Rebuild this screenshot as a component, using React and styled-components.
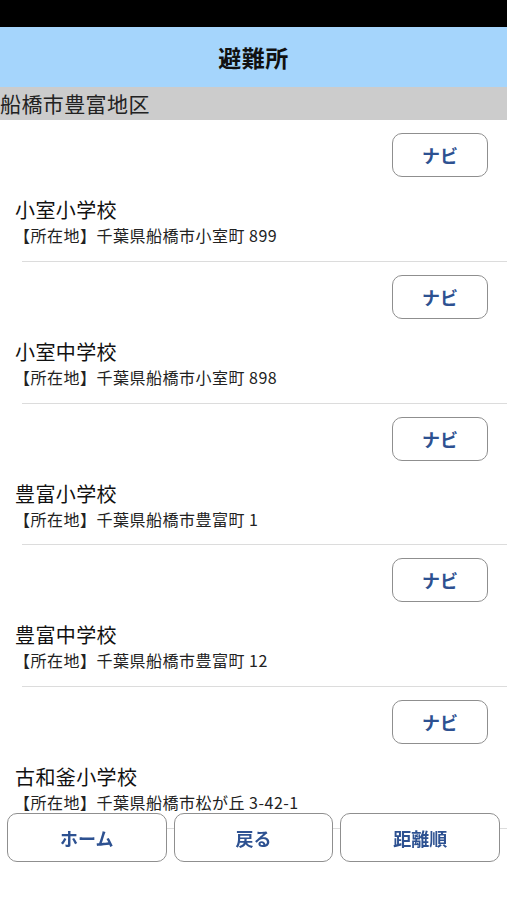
import React from "react";
import styled, { createGlobalStyle } from "styled-components";

const Global = createGlobalStyle`
  html, body { margin: 0; padding: 0; background: #fff; }
  body {
    font-family: "Noto Sans CJK JP", "Noto Sans", sans-serif;
    color: #111;
    -webkit-font-smoothing: antialiased;
  }
`;

const Page = styled.div`
  width: 507px;
  min-height: 900px;
  display: flex;
  flex-direction: column;
`;

const StatusBar = styled.div`
  height: 27px;
  background: #000;
`;

const Header = styled.header`
  height: 60px;
  background: #a5d5fc;
  display: flex;
  align-items: center;
  justify-content: center;
`;

const Title = styled.h1`
  margin: 0;
  font-size: 23px;
  font-weight: 700;
  color: #111;
  letter-spacing: 0.5px;
`;

const SectionBar = styled.div`
  height: 33px;
  background: #cccccc;
  display: flex;
  align-items: center;
  font-size: 21px;
  letter-spacing: 0.4px;
  color: #222;
  line-height: 1;
`;

const List = styled.ul`
  list-style: none;
  margin: 0;
  padding: 0;
`;

const Item = styled.li`
  padding: 13px 0 15.75px;
  display: flex;
  flex-direction: column;
  position: relative;
  &::after {
    content: "";
    position: absolute;
    left: 22px;
    right: 0;
    bottom: 0;
    height: 1px;
    background: #dcdcdc;
  }
`;

const NaviRow = styled.div`
  display: flex;
  justify-content: flex-end;
  padding-right: 19px;
`;

const OutlineButton = styled.button`
  box-sizing: border-box;
  width: ${(p) => p.$w || "96px"};
  height: ${(p) => p.$h || "44px"};
  border: 1.5px solid #8f8f8f;
  border-radius: 10px;
  background: #fff;
  color: #2d5191;
  font-family: "Noto Sans CJK JP", sans-serif;
  font-weight: 700;
  font-size: 18px;
  padding: 0;
  display: flex;
  align-items: center;
  justify-content: center;
`;

const Name = styled.div`
  margin: 21px 0 0 15px;
  font-size: 20px;
  line-height: 24px;
  letter-spacing: 0.4px;
  color: #111;
`;

const Address = styled.div`
  margin: 2px 0 0 14px;
  font-size: 16px;
  line-height: 22px;
  letter-spacing: 0.5px;
  color: #222;
`;

const BottomBar = styled.nav`
  position: fixed;
  left: 0;
  bottom: 38px;
  width: 507px;
  box-sizing: border-box;
  padding: 0 7px;
  display: grid;
  grid-template-columns: repeat(3, 1fr);
  gap: 7px;
`;

const items = [
  { name: "小室小学校", addr: "千葉県船橋市小室町 899" },
  { name: "小室中学校", addr: "千葉県船橋市小室町 898" },
  { name: "豊富小学校", addr: "千葉県船橋市豊富町 1" },
  { name: "豊富中学校", addr: "千葉県船橋市豊富町 12" },
  { name: "古和釜小学校", addr: "千葉県船橋市松が丘 3-42-1" },
];

export default function App() {
  return (
    <Page>
      <Global />
      <StatusBar />
      <Header>
        <Title>避難所</Title>
      </Header>
      <SectionBar>船橋市豊富地区</SectionBar>
      <List>
        {items.map((it) => (
          <Item key={it.name}>
            <NaviRow>
              <OutlineButton>ナビ</OutlineButton>
            </NaviRow>
            <Name>{it.name}</Name>
            <Address>【所在地】{it.addr}</Address>
          </Item>
        ))}
      </List>
      <BottomBar>
        <OutlineButton $w="100%" $h="49px">ホーム</OutlineButton>
        <OutlineButton $w="100%" $h="49px">戻る</OutlineButton>
        <OutlineButton $w="100%" $h="49px">距離順</OutlineButton>
      </BottomBar>
    </Page>
  );
}
